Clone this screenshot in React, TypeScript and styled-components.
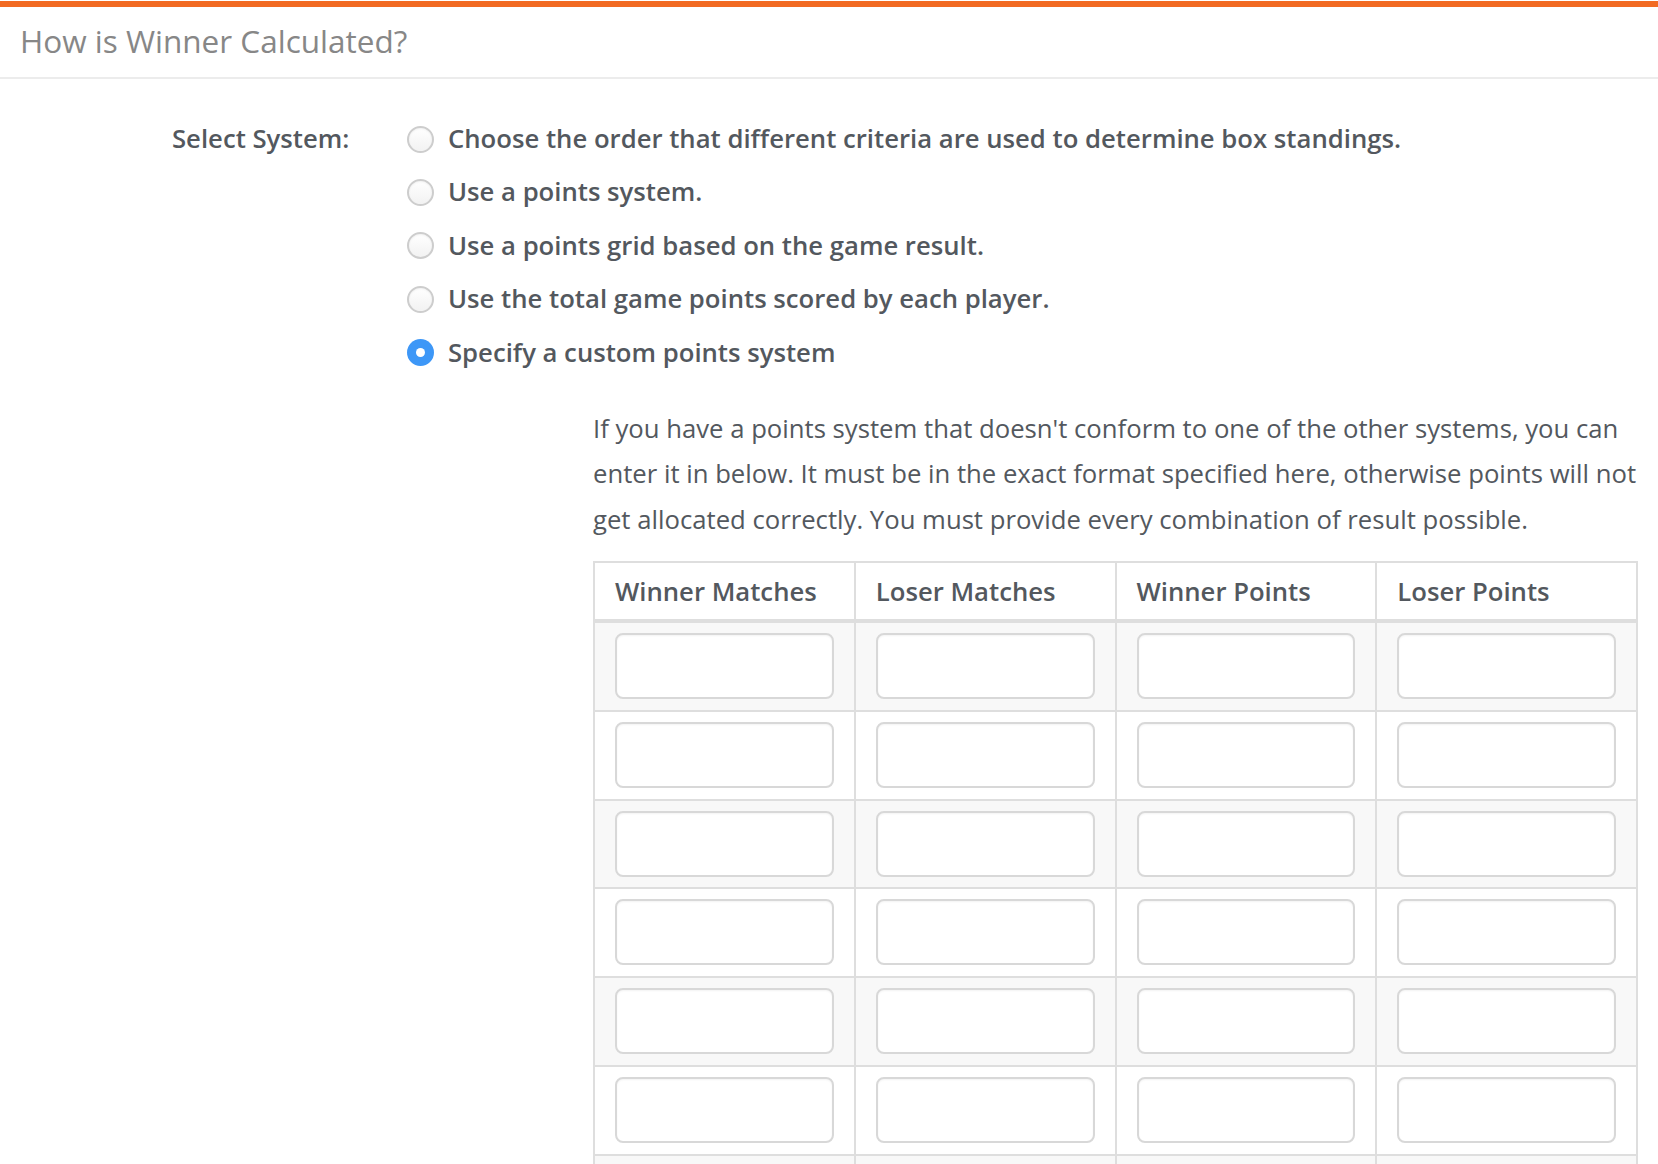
import React from "react";
import styled, { createGlobalStyle } from "styled-components";

const GlobalStyle = createGlobalStyle`
  html, body { margin: 0; padding: 0; background: #ffffff; }
  body { font-family: "Open Sans", "Noto Sans", sans-serif; color: #53585e; }
  * { box-sizing: border-box; }
`;

const Page = styled.div`
  border-top: 6px solid #f26a22;
  margin-top: 1px;
`;

const Header = styled.div`
  padding: 13px 20px 15px;
  border-bottom: 2px solid #ececec;
`;

const Title = styled.h2`
  margin: 0;
  font-size: 31.5px;
  font-weight: 400;
  line-height: 42px;
  color: #878787;
`;

const Body = styled.div`
  display: grid;
  grid-template-columns: 407px 1fr;
  padding: 40px 20px 0 0;
`;

const Label = styled.div`
  padding-left: 172px;
  font-size: 25.7px;
  font-weight: 600;
  line-height: 40px;
  color: #53585e;
`;

const Options = styled.div`
  display: flex;
  flex-direction: column;
  gap: 13.4px;
`;

const Option = styled.label`
  display: flex;
  align-items: center;
  gap: 14px;
  font-size: 25.7px;
  font-weight: 600;
  line-height: 40px;
  color: #53585e;
  cursor: pointer;
`;

const Radio = styled.span<{ $checked?: boolean }>`
  width: 27px;
  height: 27px;
  flex: none;
  border-radius: 50%;
  display: flex;
  align-items: center;
  justify-content: center;
  border: ${(p) => (p.$checked ? "none" : "2px solid #cdcdcd")};
  background: ${(p) =>
    p.$checked ? "#3d97f7" : "linear-gradient(#ffffff, #f2f2f2)"};
  box-shadow: ${(p) =>
    p.$checked ? "none" : "inset 0 1px 2px rgba(0,0,0,0.06)"};
  &::after {
    content: "";
    display: ${(p) => (p.$checked ? "block" : "none")};
    width: 9px;
    height: 9px;
    border-radius: 50%;
    background: #ffffff;
  }
`;

const Custom = styled.div`
  margin: 33px 0 0 186px;
`;

const Description = styled.p`
  margin: 0 0 19px;
  font-size: 25.7px;
  line-height: 45.5px;
  color: #53585e;
`;

const Table = styled.table`
  width: 100%;
  border-collapse: collapse;
  table-layout: fixed;
  border: 2px solid #dedede;
`;

const Th = styled.th`
  text-align: left;
  padding: 9px 20px 7px;
  font-size: 25.7px;
  font-weight: 600;
  line-height: 40px;
  color: #53585e;
  border: 2px solid #dedede;
  border-bottom-width: 4px;
`;

const Tr = styled.tr<{ $striped: boolean }>`
  background: ${(p) => (p.$striped ? "#f8f8f8" : "#ffffff")};
`;

const Td = styled.td`
  padding: 10px 20px 10.8px;
  border: 2px solid #dedede;
`;

const Input = styled.input`
  display: block;
  width: 100%;
  height: 66px;
  border: 2px solid #d8d8d8;
  border-radius: 8px;
  background: #ffffff;
  box-shadow: inset 0 1px 2px rgba(0, 0, 0, 0.05);
  font-family: inherit;
  font-size: 25.7px;
  padding: 0 14px;
  outline: none;
`;

const options = [
  "Choose the order that different criteria are used to determine box standings.",
  "Use a points system.",
  "Use a points grid based on the game result.",
  "Use the total game points scored by each player.",
  "Specify a custom points system",
];

const columns = ["Winner Matches", "Loser Matches", "Winner Points", "Loser Points"];

export default function App() {
  const rows = Array.from({ length: 8 }, (_, i) => i);
  return (
    <>
      <GlobalStyle />
      <Page>
        <Header>
          <Title>How is Winner Calculated?</Title>
        </Header>
        <Body>
          <Label>Select System:</Label>
          <div>
            <Options>
              {options.map((o, i) => (
                <Option key={o}>
                  <Radio $checked={i === 4} />
                  {o}
                </Option>
              ))}
            </Options>
            <Custom>
              <Description>
                If you have a points system that doesn't conform to one of the other systems, you can
                enter it in below. It must be in the exact format specified here, otherwise points will not
                get allocated correctly. You must provide every combination of result possible.
              </Description>
              <Table>
                <thead>
                  <tr>
                    {columns.map((c) => (
                      <Th key={c}>{c}</Th>
                    ))}
                  </tr>
                </thead>
                <tbody>
                  {rows.map((r) => (
                    <Tr key={r} $striped={r % 2 === 0}>
                      {columns.map((c) => (
                        <Td key={c}>
                          <Input type="text" aria-label={c} />
                        </Td>
                      ))}
                    </Tr>
                  ))}
                </tbody>
              </Table>
            </Custom>
          </div>
        </Body>
      </Page>
    </>
  );
}
